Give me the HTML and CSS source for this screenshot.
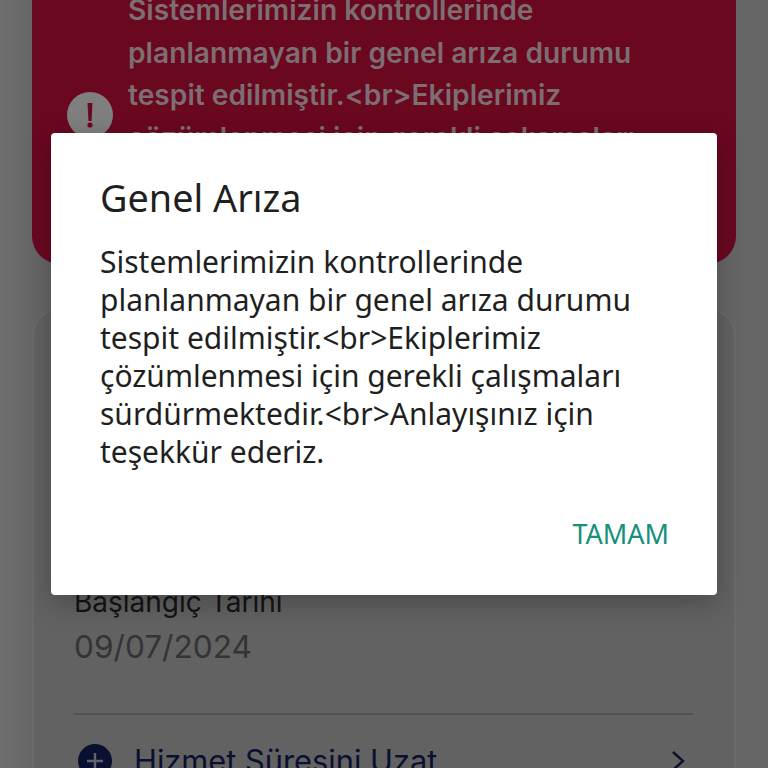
FILE: index.html
```html
<!DOCTYPE html>
<html lang="tr">
<head>
<meta charset="utf-8">
<title>Genel Arıza</title>
<link rel="stylesheet" href="styles.css">
</head>
<body>
<div class="page">
  <section class="banner">
    <svg class="banner-icon" viewBox="0 0 46 46" aria-hidden="true"><circle cx="23" cy="23" r="23" fill="#7f7f7f"/><path d="M20.5 11h5l-1 18h-3z" fill="#6a0820"/><circle cx="23" cy="33" r="2.6" fill="#6a0820"/></svg>
    <p class="banner-text">Sistemlerimizin kontrollerinde planlanmayan bir genel arıza durumu tespit edilmiştir.&lt;br&gt;Ekiplerimiz çözümlenmesi için gerekli çalışmaları sürdürmektedir.</p>
  </section>
  <section class="card">
    <div class="field">
      <div class="field-label">Başlangıç Tarihi</div>
      <div class="field-value">09/07/2024</div>
    </div>
    <div class="rule"></div>
    <div class="action">
      <svg class="action-icon" viewBox="0 0 34 34" aria-hidden="true"><circle cx="17" cy="17" r="17" fill="#0a1130"/><path d="M17 9v16M9 17h16" stroke="#62646c" stroke-width="2.4"/></svg>
      <span class="action-text">Hizmet Süresini Uzat</span>
      <svg class="chevron" viewBox="0 0 14 22" aria-hidden="true"><path d="M2 2l10 9-10 9" fill="none" stroke="#0e1323" stroke-width="2.4"/></svg>
    </div>
  </section>
  <div class="dialog" role="dialog">
    <h1 class="dialog-title">Genel Arıza</h1>
    <p class="dialog-body">Sistemlerimizin kontrollerinde planlanmayan bir genel arıza durumu tespit edilmiştir.&lt;br&gt;Ekiplerimiz çözümlenmesi için gerekli çalışmaları sürdürmektedir.&lt;br&gt;Anlayışınız için teşekkür ederiz.</p>
    <div class="dialog-actions"><span class="dialog-button">TAMAM</span></div>
  </div>
</div>
</body>
</html>
```
FILE: styles.css
```css
* { box-sizing: border-box; }
html, body { margin: 0; padding: 0; }
.page {
  position: relative;
  width: 768px;
  height: 768px;
  overflow: hidden;
  background: linear-gradient(90deg, #6f6f6f 0, #666666 32px);
  padding: 0 32px;
  display: flex;
  flex-direction: column;
  gap: 44px;
  font-family: Inter, Roboto, sans-serif;
}
.banner {
  height: 264px;
  flex: none;
  background: #6a0820;
  border-radius: 0 0 28px 28px;
  display: flex;
  align-items: flex-start;
  gap: 15px;
  padding: 0 56px 0 35px;
}
.banner-icon {
  flex: none;
  width: 46px;
  height: 46px;
  margin-top: 92px;
}
.banner-text {
  margin: -11px 0 0;
  color: #7d6e72;
  font-size: 28.2px;
  font-weight: 600;
  line-height: 42.5px;
}
.card {
  flex: 1;
  background: #626262;
  border: 2px solid #6a6a6a;
  border-bottom: 0;
  border-radius: 28px 28px 0 0;
  padding: 275px 41px 0 40px;
}
.field-label {
  color: #141416;
  font-size: 28px;
  line-height: 34px;
}
.field-value {
  margin-top: 9px;
  color: #343436;
  font-size: 31.6px;
  line-height: 38px;
}
.rule {
  height: 2px;
  margin-top: 47px;
  background: #525252;
}
.action {
  display: flex;
  align-items: center;
  margin-top: 29px;
  padding: 0 8px 0 4px;
  gap: 22px;
}
.action-icon { flex: none; width: 34px; height: 34px; }
.action-text {
  flex: 1;
  color: #0a1130;
  font-size: 30.8px;
  line-height: 34px;
}
.chevron { flex: none; width: 14px; height: 22px; }
.dialog {
  position: absolute;
  left: 51px;
  top: 133px;
  width: 666px;
  height: 462px;
  background: #ffffff;
  border-radius: 4px;
  box-shadow: 0 8px 28px rgba(0, 0, 0, 0.25);
  padding: 43px 44px 0 49px;
  color: #1f1f1f;
  font-family: "Noto Sans", "Open Sans", sans-serif;
}
.dialog-title {
  margin: 0;
  font-size: 37.8px;
  font-weight: 400;
  line-height: 44px;
}
.dialog-body {
  margin: 23px 0 0;
  font-size: 30px;
  line-height: 38px;
}
.dialog-actions {
  display: flex;
  justify-content: flex-end;
  margin: 44px 4px 0 0;
}
.dialog-button {
  color: #16907c;
  font-size: 27px;
  line-height: 38px;
}
```
